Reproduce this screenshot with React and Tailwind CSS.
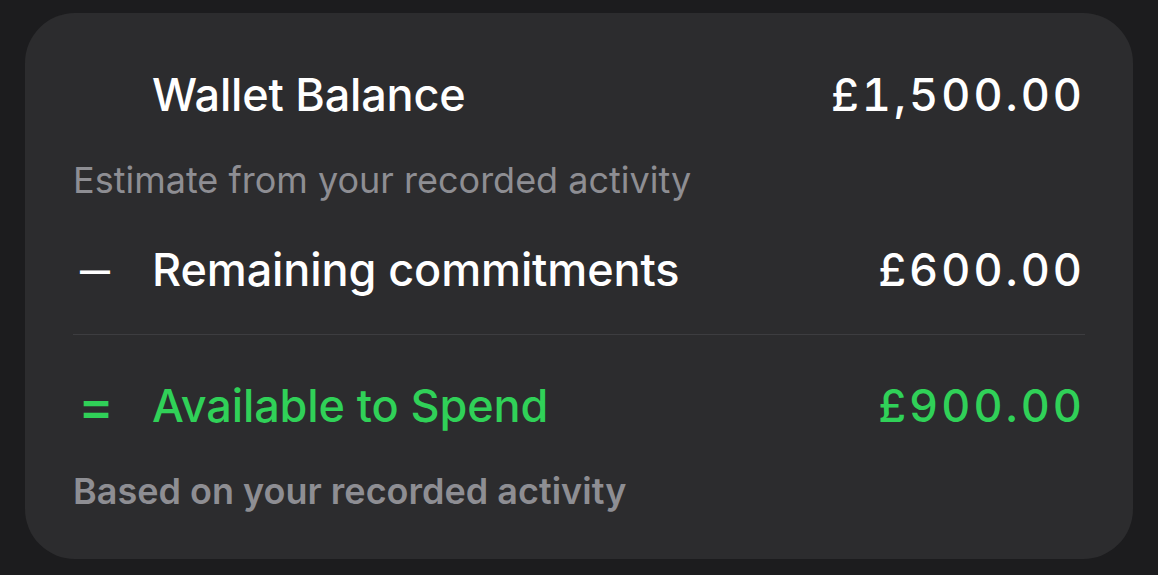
export default function App() {
  return (
    <div className="w-full h-[575px] bg-[#1c1c1e] px-[25px] pt-[13px]" style={{ fontFamily: "Inter, 'Noto Sans', sans-serif" }}>
      {/* Card */}
      <div className="h-[546px] rounded-[50px] bg-[#2c2c2e] px-12 flex flex-col">
        {/* Wallet balance */}
        <div className="mt-[58px] h-12 flex items-center justify-between text-white text-[45px] font-[550] leading-[48px]">
          <div className="flex items-center">
            <span className="w-[79px]"></span>
            <span className="tracking-[-0.2px]">Wallet Balance</span>
          </div>
          <span className="tabular-nums tracking-[3px]">£1,500.00</span>
        </div>
        <p className="mt-[41px] h-10 leading-10 text-[36px] text-[#8e8e93]">Estimate from your recorded activity</p>

        {/* Commitments */}
        <div className="mt-[46px] h-12 flex items-center justify-between text-white text-[45px] font-[550] leading-[48px]">
          <div className="flex items-center">
            <span className="w-[79px] pl-[7px] text-[30px] font-bold">—</span>
            <span className="tracking-[-0.1px]">Remaining commitments</span>
          </div>
          <span className="tabular-nums tracking-[3px]">£600.00</span>
        </div>

        <div className="mt-[40px] h-px bg-[#3d3d40]"></div>

        {/* Available */}
        <div className="mt-[47px] h-12 flex items-center justify-between text-[#30d158] text-[45px] font-[550] leading-[48px]">
          <div className="flex items-center">
            <span className="w-[79px] pl-[5px] text-[54px] font-medium">=</span>
            <span className="tracking-[-0.1px]">Available to Spend</span>
          </div>
          <span className="tabular-nums tracking-[3px]">£900.00</span>
        </div>
        <p className="mt-[41px] h-10 leading-10 text-[36px] font-semibold text-[#8e8e93]">Based on your recorded activity</p>
      </div>
    </div>
  )
}
